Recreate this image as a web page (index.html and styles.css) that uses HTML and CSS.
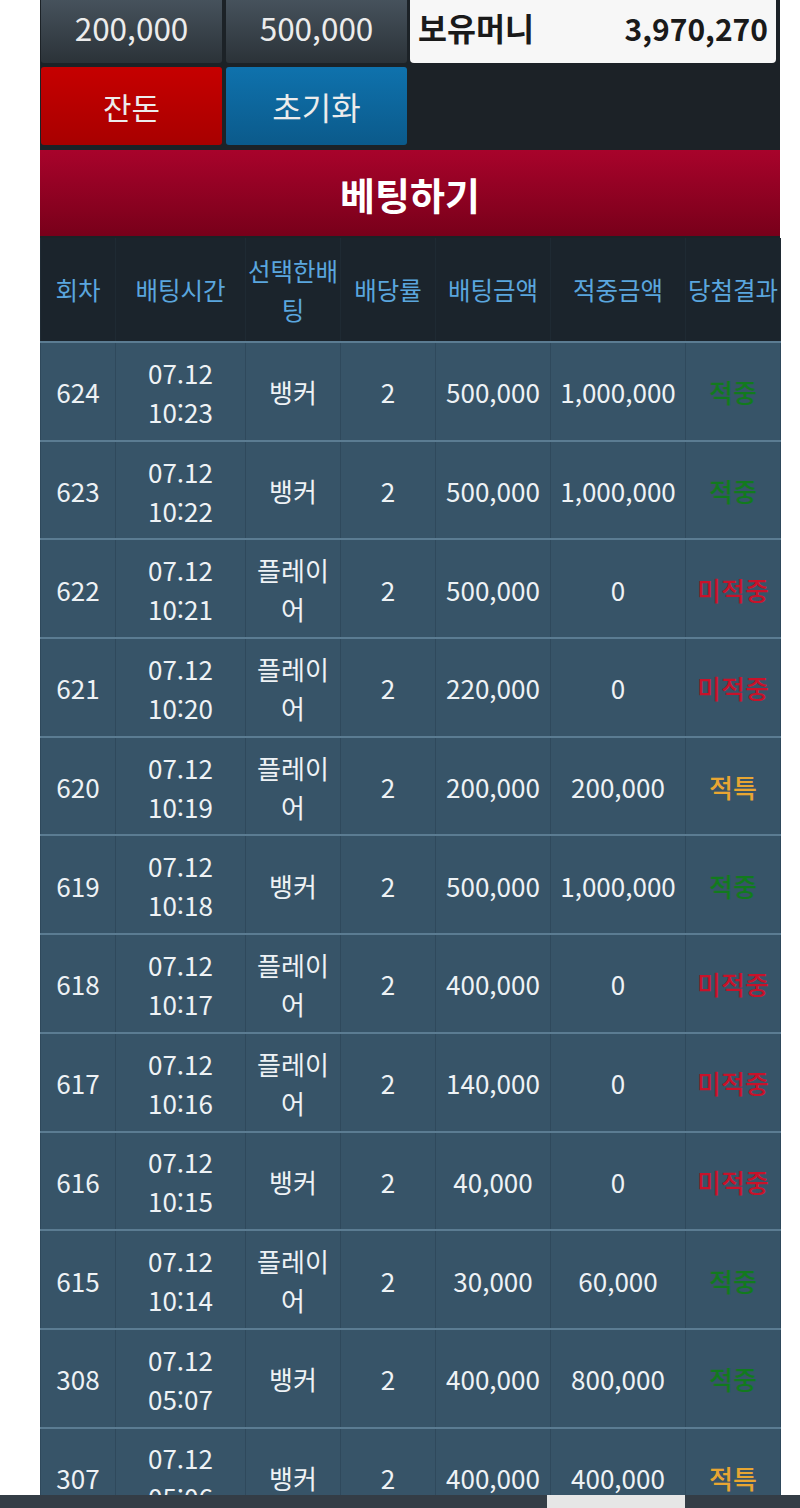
FILE: index.html
```html
<!DOCTYPE html>
<html lang="ko">
<head>
<meta charset="utf-8">
<title>베팅하기</title>
<link rel="stylesheet" href="styles.css">
</head>
<body>
<div class="wrap">
  <div class="panel">
    <div class="btn dark">200,000</div>
    <div class="btn dark">500,000</div>
    <div class="money"><span class="label">보유머니</span><span class="amount">3,970,270</span></div>
    <div class="btn red">잔돈</div>
    <div class="btn blue">초기화</div>
  </div>
  <div class="banner">베팅하기</div>
  <table class="tbl">
    <colgroup>
      <col class="c1"><col class="c2"><col class="c3"><col class="c4"><col class="c5"><col class="c6"><col class="c7">
    </colgroup>
    <thead>
      <tr><th>회차</th><th>배팅시간</th><th>선택한배팅</th><th>배당률</th><th>배팅금액</th><th>적중금액</th><th>당첨결과</th></tr>
    </thead>
    <tbody>
      <tr><td>624</td><td>07.12<br>10:23</td><td>뱅커</td><td>2</td><td>500,000</td><td>1,000,000</td><td class="win">적중</td></tr>
      <tr><td>623</td><td>07.12<br>10:22</td><td>뱅커</td><td>2</td><td>500,000</td><td>1,000,000</td><td class="win">적중</td></tr>
      <tr><td>622</td><td>07.12<br>10:21</td><td>플레이어</td><td>2</td><td>500,000</td><td>0</td><td class="lose">미적중</td></tr>
      <tr><td>621</td><td>07.12<br>10:20</td><td>플레이어</td><td>2</td><td>220,000</td><td>0</td><td class="lose">미적중</td></tr>
      <tr><td>620</td><td>07.12<br>10:19</td><td>플레이어</td><td>2</td><td>200,000</td><td>200,000</td><td class="tie">적특</td></tr>
      <tr><td>619</td><td>07.12<br>10:18</td><td>뱅커</td><td>2</td><td>500,000</td><td>1,000,000</td><td class="win">적중</td></tr>
      <tr><td>618</td><td>07.12<br>10:17</td><td>플레이어</td><td>2</td><td>400,000</td><td>0</td><td class="lose">미적중</td></tr>
      <tr><td>617</td><td>07.12<br>10:16</td><td>플레이어</td><td>2</td><td>140,000</td><td>0</td><td class="lose">미적중</td></tr>
      <tr><td>616</td><td>07.12<br>10:15</td><td>뱅커</td><td>2</td><td>40,000</td><td>0</td><td class="lose">미적중</td></tr>
      <tr><td>615</td><td>07.12<br>10:14</td><td>플레이어</td><td>2</td><td>30,000</td><td>60,000</td><td class="win">적중</td></tr>
      <tr><td>308</td><td>07.12<br>05:07</td><td>뱅커</td><td>2</td><td>400,000</td><td>800,000</td><td class="win">적중</td></tr>
      <tr><td>307</td><td>07.12<br>05:06</td><td>뱅커</td><td>2</td><td>400,000</td><td>400,000</td><td class="tie">적특</td></tr>
    </tbody>
  </table>
</div>
<div class="bottombar"><div class="thumb"></div></div>
</body>
</html>
```

FILE: styles.css
```css
html, body {
  margin: 0;
  padding: 0;
  background: #ffffff;
}
body {
  font-family: "Noto Sans CJK KR", "Noto Sans", sans-serif;
  color: #eef2f5;
}
.wrap {
  width: 740px;
  margin-left: 40px;
  background: #1c2227;
}
.panel {
  background: #1c2227;
  display: grid;
  grid-template-columns: 181px 181px 365px;
  grid-template-rows: 63px 78px;
  column-gap: 4px;
  row-gap: 4px;
  padding: 0 5px 3px 1px;
}
.btn {
  display: flex;
  align-items: center;
  justify-content: center;
  border-radius: 3px;
  line-height: 1;
  color: #ececec;
}
.btn.dark {
  background: linear-gradient(#46525c, #2b3238);
  border-radius: 0 0 3px 3px;
  font-size: 31.5px;
  padding-bottom: 8px;
}
.btn.red {
  background: linear-gradient(#c60000, #a80000);
  font-size: 31px;
}
.btn.blue {
  background: linear-gradient(#0f72ad, #0b5a8b);
  font-size: 32px;
}
.money {
  margin-left: -1px;
  background: #f7f7f7;
  border-radius: 0 0 4px 4px;
  display: flex;
  align-items: center;
  justify-content: space-between;
  padding: 0 8px 8px 8px;
  color: #1a1a1a;
  font-weight: bold;
  font-size: 30px;
  line-height: 1;
}
.money .label {
  font-size: 31.5px;
}
.banner {
  margin-top: 2px;
  height: 86px;
  background: linear-gradient(#a8032b, #78001a);
  color: #ffffff;
  font-weight: bold;
  font-size: 38px;
  display: flex;
  align-items: center;
  justify-content: center;
  border-bottom: 2px solid #1c2227;
}
.tbl {
  width: 740px;
  border-collapse: collapse;
  table-layout: fixed;
}
.c1 { width: 75px; }
.c2 { width: 130px; }
.c3 { width: 95px; }
.c4 { width: 95px; }
.c5 { width: 115px; }
.c6 { width: 135px; }
.c7 { width: 95px; }
.tbl th {
  background: #1b242c;
  color: #5aa6de;
  font-weight: normal;
  font-size: 24.5px;
  line-height: 39px;
  height: 103px;
  padding: 0;
  text-align: center;
  border-left: 1px solid #1f2a33;
  border-right: 1px solid #1f2a33;
}
.tbl th:last-child {
  white-space: nowrap;
  text-align: left;
  padding-left: 2px;
}
.tbl td {
  background: #375468;
  font-size: 26px;
  line-height: 39px;
  height: 95.7px;
  padding: 1px 1px 0;
  text-align: center;
  border-top: 2px solid #5b7c92;
  border-left: 1px solid #2f495c;
  border-right: 1px solid #2f495c;
}
.tbl td.win { color: #127a1e; font-weight: 500; }
.tbl td.lose { color: #c8122a; font-weight: 500; }
.tbl td.tie { color: #e8a632; font-weight: 500; }
.bottombar {
  position: fixed;
  left: 0;
  right: 0;
  bottom: 0;
  height: 13px;
  background: #343d46;
}
.bottombar .thumb {
  position: absolute;
  left: 547px;
  top: 0;
  width: 138px;
  height: 13px;
  background: #e6e6e6;
}
```
